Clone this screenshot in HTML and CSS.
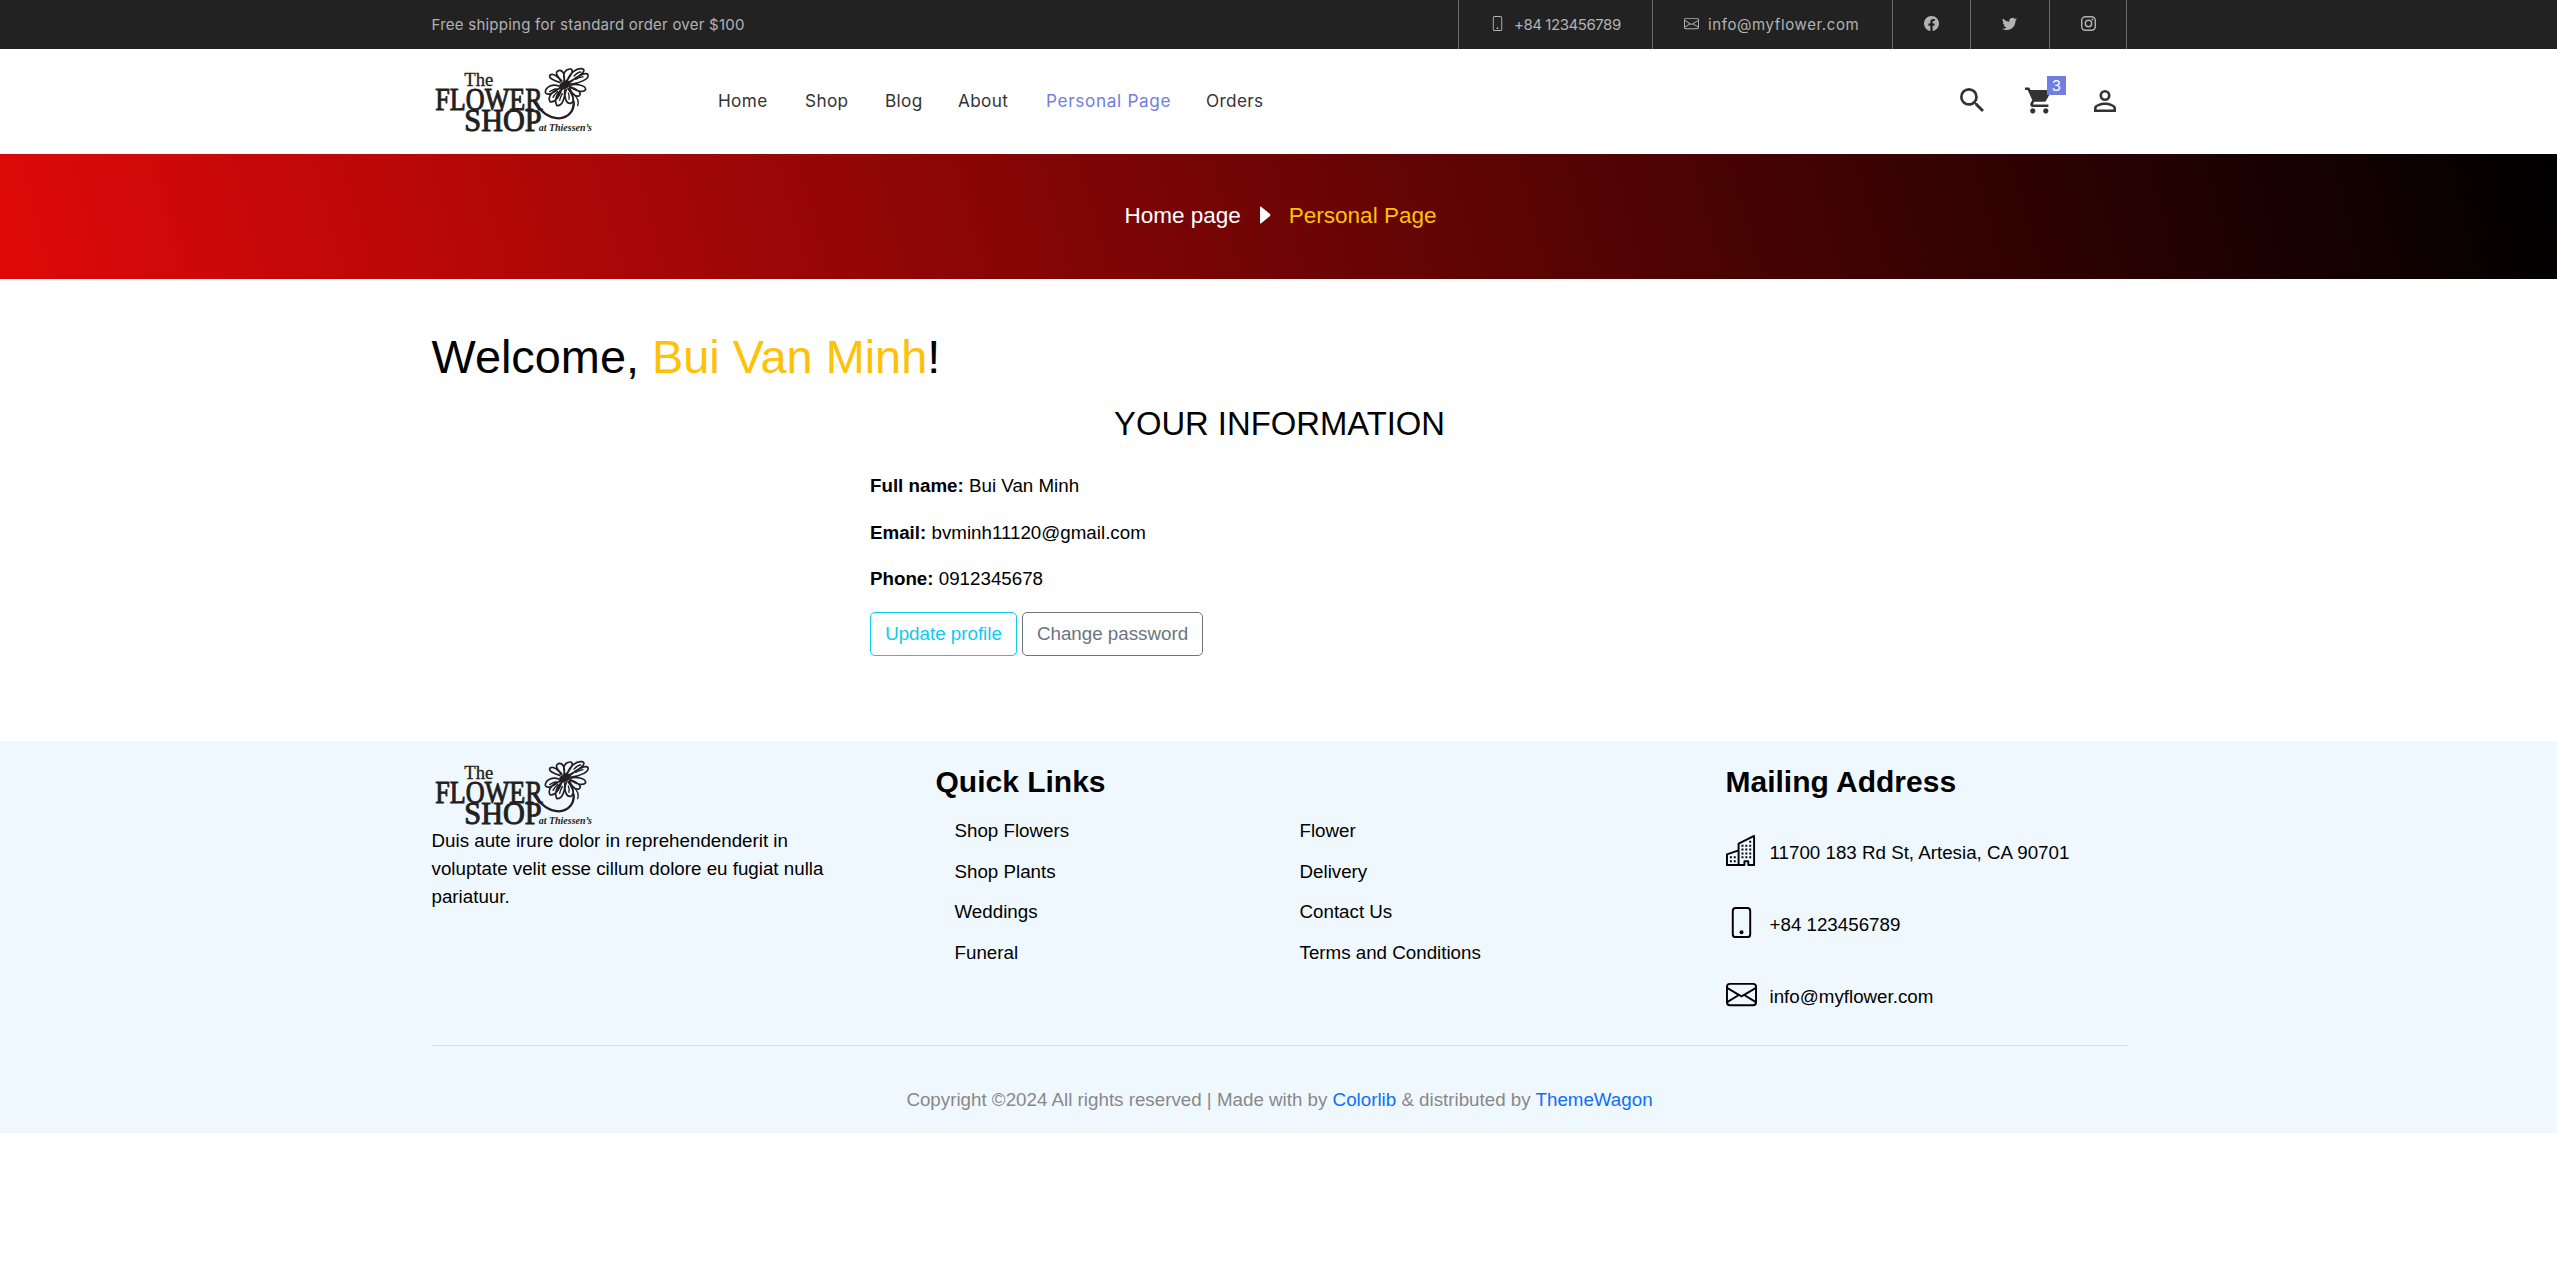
FILE: index.html
```html
<!DOCTYPE html>
<html lang="en">
<head>
<meta charset="utf-8">
<title>Personal Page</title>
<link rel="stylesheet" href="styles.css">
</head>
<body>
<svg class="defs" width="0" height="0" aria-hidden="true">
  <symbol id="phone" viewBox="0 0 16 16"><path d="M11 1a1 1 0 0 1 1 1v12a1 1 0 0 1-1 1H5a1 1 0 0 1-1-1V2a1 1 0 0 1 1-1zM5 0a2 2 0 0 0-2 2v12a2 2 0 0 0 2 2h6a2 2 0 0 0 2-2V2a2 2 0 0 0-2-2z"/><path d="M8 14a1 1 0 1 0 0-2 1 1 0 0 0 0 2"/></symbol>
  <symbol id="mail" viewBox="0 0 16 16"><path d="M0 4a2 2 0 0 1 2-2h12a2 2 0 0 1 2 2v8a2 2 0 0 1-2 2H2a2 2 0 0 1-2-2zm2-1a1 1 0 0 0-1 1v.217l7 4.2 7-4.2V4a1 1 0 0 0-1-1zm13 2.383-4.708 2.825L15 11.105zm-.034 6.876-5.64-3.471L8 9.583l-1.326-.795-5.64 3.47A1 1 0 0 0 2 13h12a1 1 0 0 0 .966-.741M1 11.105l4.708-2.897L1 5.383z"/></symbol>
  <symbol id="buildings" viewBox="0 0 16 16"><path d="M14.763.075A.5.5 0 0 1 15 .5v15a.5.5 0 0 1-.5.5h-3a.5.5 0 0 1-.5-.5V14h-1v1.5a.5.5 0 0 1-.5.5h-9a.5.5 0 0 1-.5-.5V10a.5.5 0 0 1 .342-.474L6 7.64V4.5a.5.5 0 0 1 .276-.447l8-4a.5.5 0 0 1 .487.022M6 8.694 1 10.36V15h5zM7 15h2v-1.5a.5.5 0 0 1 .5-.5h2a.5.5 0 0 1 .5.5V15h2V1.309l-7 3.5z"/><path d="M2 11h1v1H2zm2 0h1v1H4zm-2 2h1v1H2zm2 0h1v1H4zm4-4h1v1H8zm2 0h1v1h-1zm-2 2h1v1H8zm2 0h1v1h-1zm2-2h1v1h-1zm0 2h1v1h-1zM8 7h1v1H8zm2 0h1v1h-1zm2 0h1v1h-1zM8 5h1v1H8zm2 0h1v1h-1zm2 0h1v1h-1zm0-2h1v1h-1z"/></symbol>
  <symbol id="facebook" viewBox="0 0 16 16"><path d="M16 8.049c0-4.446-3.582-8.05-8-8.05C3.58 0-.002 3.603-.002 8.05c0 4.017 2.926 7.347 6.75 7.951v-5.625h-2.03V8.05H6.75V6.275c0-2.017 1.195-3.131 3.022-3.131.876 0 1.791.157 1.791.157v1.98h-1.009c-.993 0-1.303.621-1.303 1.258v1.51h2.218l-.354 2.326H9.25V16c3.824-.604 6.75-3.934 6.75-7.951"/></symbol>
  <symbol id="twitter" viewBox="0 0 16 16"><path d="M5.026 15c6.038 0 9.341-5.003 9.341-9.334q.002-.211-.006-.422A6.7 6.7 0 0 0 16 3.542a6.7 6.7 0 0 1-1.889.518 3.3 3.3 0 0 0 1.447-1.817 6.5 6.5 0 0 1-2.087.793A3.286 3.286 0 0 0 7.875 6.03a9.32 9.32 0 0 1-6.767-3.429 3.29 3.29 0 0 0 1.018 4.382A3.3 3.3 0 0 1 .64 6.575v.045a3.29 3.29 0 0 0 2.632 3.218 3.2 3.2 0 0 1-.865.115 3 3 0 0 1-.614-.057 3.28 3.28 0 0 0 3.067 2.277A6.6 6.6 0 0 1 .78 13.58a6 6 0 0 1-.78-.045A9.34 9.34 0 0 0 5.026 15"/></symbol>
  <symbol id="instagram" viewBox="0 0 16 16"><rect x=".75" y=".75" width="14.5" height="14.5" rx="4" fill="none" stroke="currentColor" stroke-width="1.5"/><circle cx="8" cy="8" r="3.4" fill="none" stroke="currentColor" stroke-width="1.5"/><circle cx="12.3" cy="3.7" r="1"/></symbol>
  <symbol id="search" viewBox="3 3 17.5 17.5"><path d="M15.5 14h-.79l-.28-.27A6.47 6.47 0 0 0 16 9.5 6.5 6.5 0 1 0 9.5 16c1.61 0 3.09-.59 4.23-1.57l.27.28v.79l5 4.99L20.49 19zm-6 0C7.01 14 5 11.99 5 9.5S7.01 5 9.5 5 14 7.01 14 9.5 11.99 14 9.5 14"/></symbol>
  <symbol id="cart" viewBox="1 2 20 20"><path d="M7 18c-1.1 0-1.99.9-1.99 2S5.9 22 7 22s2-.9 2-2-.9-2-2-2M1 2v2h2l3.6 7.59-1.35 2.45c-.16.28-.25.61-.25.96 0 1.1.9 2 2 2h12v-2H7.42c-.14 0-.25-.11-.25-.25l.03-.12.9-1.63h7.45c.75 0 1.41-.41 1.75-1.03l3.58-6.49A1 1 0 0 0 20 4H5.21l-.94-2zm16 16c-1.1 0-1.99.9-1.99 2s.89 2 1.99 2 2-.9 2-2-.9-2-2-2"/></symbol>
  <symbol id="user" viewBox="4 4 16 16"><path d="M12 5.9a2.1 2.1 0 1 1 0 4.2 2.1 2.1 0 0 1 0-4.2m0 9c2.97 0 6.1 1.46 6.1 2.1v1.1H5.9V17c0-.64 3.13-2.1 6.1-2.1M12 4a4 4 0 1 0 0 8 4 4 0 0 0 0-8m0 9c-2.67 0-8 1.34-8 4v3h16v-3c0-2.66-5.33-4-8-4"/></symbol>
  <symbol id="logo" viewBox="0 0 525 240">
    <g class="logo-type">
      <text x="115" y="78" font-size="57" stroke-width="1" textLength="87" lengthAdjust="spacingAndGlyphs">The</text>
      <text x="28" y="149" font-size="94" stroke-width="3" textLength="322" lengthAdjust="spacingAndGlyphs">FLOWER</text>
      <text x="115" y="213" font-size="92" stroke-width="3" textLength="232" lengthAdjust="spacingAndGlyphs">SHOP</text>
    </g>
    <text class="logo-script" x="338" y="212" font-size="29" textLength="160" lengthAdjust="spacingAndGlyphs">at Thiessen’s</text>
    <g fill="none" stroke="#231f20" stroke-linecap="round" stroke-linejoin="round">
      <path stroke-width="7" d="M322 122C340 150 362 174 398 175C428 174 444 152 443 127"/>
      <path stroke-width="4" d="M443 134C445 112 438 102 432 93M443 102C455 113 459 125 455 137"/>
      <path stroke-width="5" d="M401 67C383 62 366 53 372 45C382 38 399 52 405 64M407 62C390 47 386 34 400 31C413 30 417 49 414 62M416 61C409 40 418 26 435 27C445 33 432 50 421 63M424 62C430 41 451 23 468 26C485 30 463 48 429 66M432 67C452 49 480 35 486 44C490 57 463 69 433 73M433 76C449 70 479 75 479 89C472 99 451 92 431 80M398 78C380 70 357 82 358 98C365 110 388 96 402 83M402 85C379 91 364 110 372 125C388 130 404 103 407 88M409 87C391 100 384 124 393 137C409 138 418 113 416 90M421 89C412 109 420 133 435 130C450 121 436 98 426 86M430 83C436 98 447 113 460 107C470 98 450 86 433 80"/>
      <path stroke-width="4" d="M444 48C454 38 461 36 464 36M449 58C458 52 467 51 471 50M371 95C379 90 387 87 390 86M381 112C386 102 393 98 395 95M401 121C402 112 407 105 409 101M429 118C431 111 429 104 427 99"/>
    </g>
    <ellipse cx="416" cy="75" rx="18" ry="12" fill="#231f20" transform="rotate(-28 416 75)"/>
  </symbol>
</svg>

<header>
  <div class="topbar">
    <div class="container topbar-inner">
      <p class="promo">Free shipping for standard order over $100</p>
      <div class="contacts">
        <a class="contact tel"><svg class="ico"><use href="#phone"/></svg><span>+84 123456789</span></a>
        <a class="contact email"><svg class="ico"><use href="#mail"/></svg><span>info@myflower.com</span></a>
        <a class="contact social"><svg class="ico"><use href="#facebook"/></svg></a>
        <a class="contact social"><svg class="ico"><use href="#twitter"/></svg></a>
        <a class="contact social"><svg class="ico"><use href="#instagram"/></svg></a>
      </div>
    </div>
  </div>
  <div class="container navbar">
    <svg class="logo"><use href="#logo"/></svg>
    <nav class="menu">
      <a class="m-home">Home</a><a class="m-shop">Shop</a><a class="m-blog">Blog</a><a class="m-about">About</a><a class="m-personal active">Personal Page</a><a>Orders</a>
    </nav>
    <div class="actions">
      <svg class="a-search"><use href="#search"/></svg>
      <span class="cart"><svg class="a-cart"><use href="#cart"/></svg><b class="badge">3</b></span>
      <svg class="a-user"><use href="#user"/></svg>
    </div>
  </div>
</header>

<div class="breadcrumb">
  <span>Home page</span>
  <svg class="caret" viewBox="0 0 12 18"><path d="M1 1.2Q1 0 2.2.7L11 8Q12 9 11 10L2.2 17.3Q1 18 1 16.8z"/></svg>
  <span class="gold">Personal Page</span>
</div>

<main class="container">
  <h1>Welcome, <span class="gold">Bui Van Minh</span>!</h1>
  <h2>YOUR INFORMATION</h2>
  <div class="info">
    <p><b>Full name:</b> Bui Van Minh</p>
    <p><b>Email:</b> bvminh11120@gmail.com</p>
    <p><b>Phone:</b> 0912345678</p>
    <div class="buttons"><a class="btn btn-info">Update profile</a><a class="btn btn-muted">Change password</a></div>
  </div>
</main>

<footer>
  <div class="container">
    <div class="columns">
      <section class="about">
        <svg class="logo"><use href="#logo"/></svg>
        <p>Duis aute irure dolor in reprehendenderit in voluptate velit esse cillum dolore eu fugiat nulla pariatuur.</p>
      </section>
      <section class="links">
        <h3>Quick Links</h3>
        <div class="lists">
          <ul><li>Shop Flowers</li><li>Shop Plants</li><li>Weddings</li><li>Funeral</li></ul>
          <ul><li>Flower</li><li>Delivery</li><li>Contact Us</li><li>Terms and Conditions</li></ul>
        </div>
      </section>
      <section class="mailing">
        <h3>Mailing Address</h3>
        <p><svg><use href="#buildings"/></svg><span>11700 183 Rd St, Artesia, CA 90701</span></p>
        <p><svg><use href="#phone"/></svg><span>+84 123456789</span></p>
        <p><svg><use href="#mail"/></svg><span>info@myflower.com</span></p>
      </section>
    </div>
    <p class="copyright">Copyright ©2024 All rights reserved | Made with by <a>Colorlib</a> &amp; distributed by <a>ThemeWagon</a></p>
  </div>
</footer>
</body>
</html>
```
FILE: styles.css
```css
* { box-sizing: border-box; }
body { margin: 0; background: #fff; color: #000; font: 18.75px/28.125px "Liberation Sans", Arial, sans-serif; }
h1, h2, h3, p, ul { margin: 0; padding: 0; font-weight: 400; }
ul { list-style: none; }
svg { display: block; fill: currentColor; flex: none; }
.defs { position: absolute; }
.container { width: 1696px; margin-left: 431.5px; }
.gold { color: #ffc107; }

.topbar { height: 49px; background: #222; color: #b2b2b2; font: 15px/49px Inter, sans-serif; }
.topbar-inner { display: flex; justify-content: space-between; }
.promo { letter-spacing: .24px; }
.contacts { display: flex; width: 670px; margin-right: -.5px; }
.contact { display: flex; align-items: center; flex: none; border-left: 1px solid #6a6a6a; height: 49px; padding-left: 31px; white-space: nowrap; }
.contact .ico { width: 15px; height: 15px; margin-top: -2px; }
.tel { width: 194px; }
.tel span { margin-left: 9px; letter-spacing: -.45px; }
.email { width: 240px; }
.email span { margin-left: 9px; letter-spacing: .6px; }
.social { width: 78.4px; }
.social:last-child { border-right: 1px solid #6a6a6a; }

.logo { width: 175px; height: 80px; margin-left: -6px; overflow: visible; }
.logo-type { font-family: "Liberation Serif", serif; fill: #231f20; stroke: #231f20; }
.logo-script { font-family: "Liberation Serif", serif; font-style: italic; font-weight: 700; fill: #231f20; }
.navbar { display: flex; height: 105px; padding-top: 11px; color: #333; }
.menu { display: flex; margin-left: 117.5px; font: 400 17.2px/26px Inter, sans-serif; letter-spacing: .35px; padding-top: 28px; }
.menu a { white-space: nowrap; }
.m-home { width: 87px; }
.m-shop { width: 80px; }
.m-blog { width: 73px; }
.m-about { width: 88px; }
.m-personal { width: 160px; letter-spacing: .65px; }
.active { color: #717fe0; }
.actions { display: flex; margin-left: auto; padding: 27px 12px 0 0; }
.a-search { width: 24px; height: 24px; margin-top: 1px; }
.cart { position: relative; margin: 0 42.5px 0 41px; }
.a-cart { width: 26px; height: 27px; }
.badge { position: absolute; left: 22px; top: -11px; width: 19px; height: 19px; background: #717fe0; color: #fff; font: 15px/19px Inter, sans-serif; text-align: center; }
.a-user { width: 22px; height: 22px; margin-top: 3px; }

.breadcrumb { display: flex; height: 125px; padding-left: 1124.5px; color: #fff; font-size: 22.5px; line-height: 124px; background: linear-gradient(75deg, #df0909, #000); }
.caret { width: 12px; height: 18px; margin: 52px 18px 0 18px; }

main { height: 462px; padding-top: 50px; }
h1 { font-size: 46.875px; line-height: 56px; }
h2 { font-size: 32.8px; line-height: 40px; text-align: center; margin-top: 19px; }
.info { padding: 28px 0 0 438.5px; }
.info p { margin-bottom: 18.5px; }
.buttons { display: flex; gap: 5px; }
.btn { height: 44px; border: 1.25px solid; border-radius: 5px; line-height: 42px; text-align: center; }
.btn-info { width: 147px; color: #0dcaf0; }
.btn-muted { width: 181px; color: #6c757d; }

footer { height: 392px; background: #f0f8ff; }
.columns { display: flex; height: 305px; border-bottom: 1px solid #dadfe5; }
.about { width: 504px; padding-top: 12px; }
.about p { width: 410px; margin-top: -6px; }
h3 { font-size: 30px; line-height: 36px; font-weight: 700; padding-top: 22.5px; }
.links { width: 790px; }
.lists { display: flex; padding-left: 19px; margin-top: 17.5px; }
.lists ul { width: 345px; }
.lists li { height: 40.6px; }
.mailing p { display: flex; height: 72.2px; }
.mailing h3 { margin-bottom: 35.5px; }
.mailing svg { width: 31px; height: 31px; margin: 0 13px 0 0; }
.mailing span { padding-top: 4px; }
.copyright { margin-top: 40px; text-align: center; color: #888; }
.copyright a { color: #0d6efd; }
```
